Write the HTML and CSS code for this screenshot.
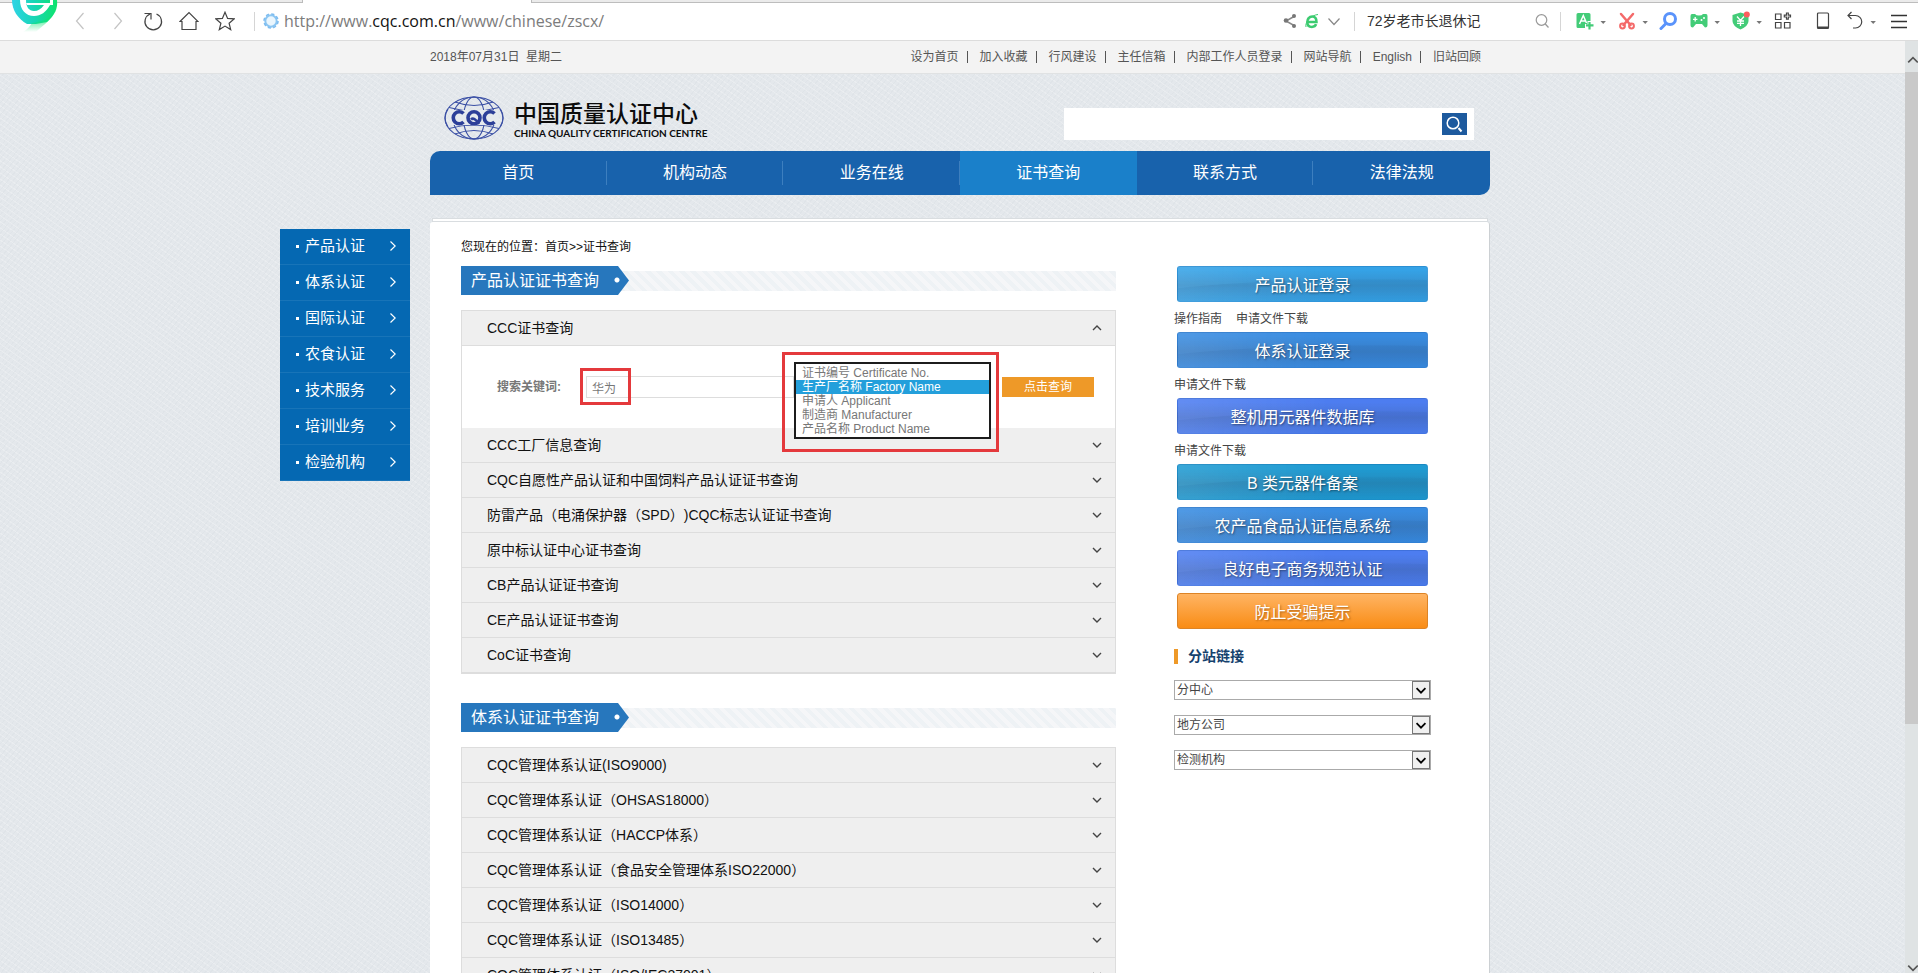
FILE: index.html
```html
<!DOCTYPE html>
<html lang="zh-CN">
<head>
<meta charset="utf-8">
<title>中国质量认证中心 - 证书查询</title>
<link rel="stylesheet" href="styles.css">
</head>
<body>
<svg class="sprite" aria-hidden="true">
  <symbol id="down" viewBox="0 0 10 6"><path d="M1 1l4 4 4-4" fill="none" stroke="currentColor" stroke-width="1.4"/></symbol>
  <symbol id="up" viewBox="0 0 10 6"><path d="M1 5l4-4 4 4" fill="none" stroke="currentColor" stroke-width="1.4"/></symbol>
  <symbol id="right" viewBox="0 0 6 10"><path d="M0.500.500L5.200 5 .500 9.500" fill="none" stroke="currentColor" stroke-width="1.2"/></symbol>
  <symbol id="caret" viewBox="0 0 8 20"><path d="M1.500 10h5.400L4.200 13z" fill="#777"/></symbol>
</svg>

<header class="browser">
  <div class="tabs"><span class="tab-side"></span><span class="tab-active"></span><span class="tab-rest"></span></div>
  <div class="toolbar">
    <svg class="app-logo" viewBox="0 0 48 36">
      <defs>
        <linearGradient id="lg" x1="0" x2="1"><stop offset="0" stop-color="#2fd3e6"/><stop offset=".5" stop-color="#18d6b4"/><stop offset="1" stop-color="#0fe36c"/></linearGradient>
        <linearGradient id="lt" x1="0" x2="0" y1="0" y2="1"><stop offset="0" stop-color="#12e275"/><stop offset="1" stop-color="#12e275" stop-opacity="0"/></linearGradient>
      </defs>
      <path d="M1 0h45c1 8-2 15-10 22L25 24 16 24C7 19 1 10 1 0z" fill="url(#lg)"/>
      <path d="M43 13C38 22 31 26 25 32H12c5-3 7-6 9-9 9-1 17-4 22-10z" fill="url(#lt)"/>
      <path d="M9 0c0 10 6 16 14 16 7 0 12-4 16-11h-6c-3 4-6 6-10 6-5 0-8-4-8-11z" fill="#fff"/>
      <path d="M15 3h24V0h3v5H16z" fill="#fff"/>
    </svg>
    <nav class="history" aria-label="浏览">
      <button class="tool" aria-label="后退"><svg viewBox="0 0 20 20"><path d="M12.500 2L5.500 10l7 8" class="ln pale"/></svg></button>
      <button class="tool" aria-label="前进"><svg viewBox="0 0 20 20"><path d="M7.500 2l7 8-7 8" class="ln pale"/></svg></button>
      <button class="tool" aria-label="刷新"><svg viewBox="0 0 20 20"><path d="M7 3A8.300 8.300 0 1 0 13.500 3M1.500 2.500H8V8.500" class="ln"/></svg></button>
      <button class="tool" aria-label="主页"><svg viewBox="0 0 20 20"><path d="M1 10.500L10 1.500l9 9H17V18.500H3V10.500z" class="ln"/></svg></button>
      <button class="tool" aria-label="收藏"><svg viewBox="0 0 20 20"><path d="M10 1.200l2.600 6.200 6.500.5-5 4.300 1.600 6.400L10 15.100l-5.700 3.500 1.600-6.400-5-4.300 6.500-.5z" class="ln"/></svg></button>
    </nav>
    <span class="rule"></span>
    <svg class="favicon" viewBox="0 0 16 16"><circle cx="8" cy="8" r="5.700" fill="#eaf6fe" stroke="#8cc6f2" stroke-width="2"/><circle cx="8" cy="8" r="7" fill="none" stroke="#7dbcf0" stroke-width="1.600" stroke-dasharray="3.200 2.300"/></svg>
    <div class="url">http://www.<b>cqc.com.cn</b>/www/chinese/zscx/</div>
    <div class="url-tools">
      <button class="tool" aria-label="分享"><svg viewBox="0 0 20 20"><path d="M14 5.500L6 10l8 4.500" fill="none" stroke="#888" stroke-width="1.500"/><g fill="#777"><circle cx="14" cy="5" r="2"/><circle cx="6" cy="9.500" r="2.300"/><circle cx="14" cy="15" r="2"/></g></svg></button>
      <button class="tool" aria-label="浏览模式"><svg viewBox="0 0 20 20"><path d="M5.500 11h9c0-4-1.500-5.500-4.300-5.500-3 0-4.900 2.400-4.900 5.400s1.700 5 4.600 5c2.200 0 3.700-1 4.200-2.700" fill="none" stroke="#3ccb70" stroke-width="2.500"/><path d="M4 16C2.500 12 9 4 16 3.500" fill="none" stroke="#3ccb70" stroke-width="1"/></svg></button>
      <button class="tool" aria-label="更多"><svg viewBox="0 0 20 20"><path d="M4.500 7.500l5.500 6 5.500-6" fill="none" stroke="#888" stroke-width="1.200"/></svg></button>
    </div>
    <span class="rule"></span>
    <input class="hot" type="text" aria-label="热搜" value="72岁老市长退休记">
    <button class="tool" aria-label="搜索"><svg viewBox="0 0 20 20"><circle cx="9.500" cy="9" r="5.300" fill="none" stroke="#999" stroke-width="1.200"/><path d="M13.300 13L16.500 16.500" stroke="#999" stroke-width="1.300"/></svg></button>
    <span class="rule rule-end"></span>
    <div class="addons">
      <button class="tool" aria-label="翻译"><svg viewBox="0 0 20 20"><path d="M3 2h11q1.500 0 1.500 1.500V10h-3v3H10v4H3q-1.500 0-1.500-1.500v-12Q1.500 2 3 2z" fill="#43cc78"/><path d="M4.500 13L8.300 4.500 11.500 12M6 10h4.500" fill="none" stroke="#fff" stroke-width="1.500"/><path d="M14.500 11v7.500M11 14.300h7.500" stroke="#43cc78" stroke-width="2.200"/></svg><svg class="caret"><use href="#caret"/></svg></button>
      <button class="tool" aria-label="截图"><svg viewBox="0 0 20 20"><path d="M4 3l9.500 11M16 3L6.500 14" stroke="#f46a6a" stroke-width="2.500" stroke-linecap="round"/><g fill="none" stroke="#f46a6a" stroke-width="2"><circle cx="5.500" cy="15" r="2.400"/><circle cx="14.500" cy="15" r="2.400"/></g></svg><svg class="caret"><use href="#caret"/></svg></button>
      <button class="tool" aria-label="查找"><svg viewBox="0 0 20 20"><circle cx="11" cy="8" r="5.500" fill="none" stroke="#5a93fb" stroke-width="3"/><path d="M7 12.500L2 17.500" stroke="#5a93fb" stroke-width="3" stroke-linecap="round"/></svg></button>
      <button class="tool" aria-label="游戏"><svg viewBox="0 0 20 20"><path d="M3 3h3q1 1.500 4 1.500T14 3h3q1.500 0 1.500 2v9q0 2.500-2.500 2.500L13 13H7l-3 3.500Q1.500 16.500 1.500 14V5Q1.500 3 3 3z" fill="#43cc78"/><path d="M4 8.300h4.400M6.200 6v4.500" stroke="#fff" stroke-width="1.300"/><circle cx="12.500" cy="9" r="1" fill="#fff"/><circle cx="15" cy="7" r="1" fill="#fff"/></svg><svg class="caret"><use href="#caret"/></svg></button>
      <button class="tool" aria-label="购物"><svg viewBox="0 0 20 20"><path d="M9.500 1.500L17.500 4v6q0 5-8 8.500Q1.500 15 1.500 10V4z" fill="#43cc78"/><path d="M6 5.500L9.500 9.500 13 5.500M6 10h7M6 12.300h7M9.500 9.500V15" fill="none" stroke="#fff" stroke-width="1.300"/><circle cx="15.800" cy="3.500" r="3" fill="#fc5d5d"/></svg><svg class="caret"><use href="#caret"/></svg></button>
      <button class="tool" aria-label="扩展"><svg viewBox="0 0 20 20"><path d="M2.500 3h5.500v5.500H2.500zM2.500 11.500h5.500v5.500H2.500zM11.500 11.500H17v5.500h-5.500zM13.500 2h1.800v2.200h2.200V6h-2.200v2.200h-1.800V6h-2.200V4.200h2.200z" class="ln"/></svg></button>
    </div>
    <div class="addons system">
      <button class="tool" aria-label="手机"><svg viewBox="0 0 20 20"><rect x="4.500" y="2" width="11" height="15.500" rx="1" class="ln"/><path d="M4.500 16.500h11" stroke="#444" stroke-width="2"/></svg></button>
      <button class="tool" aria-label="恢复"><svg viewBox="0 0 20 20"><path d="M6.500 1L3 4.500 6.500 8M3 4.500h7.500a6.200 6.200 0 0 1 0 12.500H8" class="ln"/></svg><svg class="caret"><use href="#caret"/></svg></button>
      <button class="tool" aria-label="菜单"><svg viewBox="0 0 20 20"><path d="M2 4.500h16M2 10.500h16M2 16.500h16" class="ln thick"/></svg></button>
    </div>
  </div>
</header>

<div class="page">
  <div class="topbar">
    <div class="wrap topbar-in">
      <span class="date">2018年07月31日&nbsp; 星期二</span>
      <nav class="top-links">
        <a href="#">设为首页</a><a href="#">加入收藏</a><a href="#">行风建设</a><a href="#">主任信箱</a><a href="#">内部工作人员登录</a><a href="#">网站导航</a><a href="#">English</a><a href="#">旧站回顾</a>
      </nav>
    </div>
  </div>

  <div class="wrap">
    <div class="masthead">
      <a class="brand" href="#">
        <svg class="globe" viewBox="0 0 60 44">
          <g fill="none" stroke="#3b50a5" stroke-width="1.100">
            <ellipse cx="30" cy="22" rx="29" ry="21"/><ellipse cx="30" cy="22" rx="21" ry="21"/><ellipse cx="30" cy="22" rx="10.500" ry="21"/>
            <path d="M11 6q19 7 38 0M5 11.500q25 7 50 0M5 32.500q25-7 50 0M11 38q19-7 38 0"/>
          </g>
          <path d="M6 14h48v15H6z" fill="#e6eaee"/>
          <path d="M1 22A29 21 0 0 1 4 13M59 22A29 21 0 0 0 56 13M1 22a29 21 0 0 0 3 9M59 22a29 21 0 0 1-3 9" fill="none" stroke="#3b50a5" stroke-width="1.100"/>
          <g fill="none" stroke="#2c3f99" stroke-width="3.600">
            <path d="M19.500 17.500a6 6 0 1 0 0 8.500"/><circle cx="30" cy="21.800" r="6"/><path d="M50.500 17.500a6 6 0 1 0 0 8.500"/><path d="M27 23.500q3-3 8 4.500" stroke-width="2.500"/>
          </g>
        </svg>
        <span class="brand-text"><strong>中国质量认证中心</strong><em>CHINA QUALITY CERTIFICATION CENTRE</em></span>
      </a>
      <form class="site-search">
        <input type="search" aria-label="站内搜索">
        <button type="button" aria-label="搜索"><svg viewBox="0 0 25 22"><circle cx="11" cy="10" r="5.800" fill="none" stroke="#fff" stroke-width="1.500"/><path d="M16.500 15l3 3.500" stroke="#fff" stroke-width="2"/></svg></button>
      </form>
    </div>
    <nav class="main-nav">
      <a href="#">首页</a><a href="#">机构动态</a><a href="#">业务在线</a><a href="#" class="on">证书查询</a><a href="#">联系方式</a><a href="#">法律法规</a>
    </nav>
  </div>

  <div class="body-grid">
    <aside class="side-nav">
      <a href="#">产品认证<svg><use href="#right"/></svg></a>
      <a href="#">体系认证<svg><use href="#right"/></svg></a>
      <a href="#">国际认证<svg><use href="#right"/></svg></a>
      <a href="#">农食认证<svg><use href="#right"/></svg></a>
      <a href="#">技术服务<svg><use href="#right"/></svg></a>
      <a href="#">培训业务<svg><use href="#right"/></svg></a>
      <a href="#">检验机构<svg><use href="#right"/></svg></a>
    </aside>

    <div class="sheet">
      <div class="sheet-lip"></div>
      <main class="panel">
        <div class="crumb">您现在的位置：<a href="#">首页</a>&gt;&gt;<a href="#">证书查询</a></div>
        <div class="columns">
          <div class="queries">
            <section>
              <div class="title"><h2>产品认证证书查询</h2></div>
              <div class="accordion">
                <button class="row open" aria-expanded="true">CCC证书查询<svg><use href="#up"/></svg></button>
                <form class="search-form">
                  <label for="kw">搜索关键词:</label>
                  <div class="kw-wrap">
                    <input id="kw" type="text" value="华为">
                    <span class="mark"></span>
                  </div>
                  <div class="type-mark">
                    <select size="5" aria-label="查询类型">
                      <option>证书编号 Certificate No.</option>
                      <option selected>生产厂名称 Factory Name</option>
                      <option>申请人 Applicant</option>
                      <option>制造商 Manufacturer</option>
                      <option>产品名称 Product Name</option>
                    </select>
                  </div>
                  <button type="button" class="go">点击查询</button>
                </form>
                <button class="row">CCC工厂信息查询<svg><use href="#down"/></svg></button>
                <button class="row">CQC自愿性产品认证和中国饲料产品认证证书查询<svg><use href="#down"/></svg></button>
                <button class="row">防雷产品（电涌保护器（SPD）)CQC标志认证证书查询<svg><use href="#down"/></svg></button>
                <button class="row">原中标认证中心证书查询<svg><use href="#down"/></svg></button>
                <button class="row">CB产品认证证书查询<svg><use href="#down"/></svg></button>
                <button class="row">CE产品认证证书查询<svg><use href="#down"/></svg></button>
                <button class="row">CoC证书查询<svg><use href="#down"/></svg></button>
              </div>
            </section>
            <section>
              <div class="title"><h2>体系认证证书查询</h2></div>
              <div class="accordion">
                <button class="row">CQC管理体系认证(ISO9000)<svg><use href="#down"/></svg></button>
                <button class="row">CQC管理体系认证（OHSAS18000）<svg><use href="#down"/></svg></button>
                <button class="row">CQC管理体系认证（HACCP体系）<svg><use href="#down"/></svg></button>
                <button class="row">CQC管理体系认证（食品安全管理体系ISO22000）<svg><use href="#down"/></svg></button>
                <button class="row">CQC管理体系认证（ISO14000）<svg><use href="#down"/></svg></button>
                <button class="row">CQC管理体系认证（ISO13485）<svg><use href="#down"/></svg></button>
                <button class="row">CQC管理体系认证（ISO/IEC27001）<svg><use href="#down"/></svg></button>
              </div>
            </section>
          </div>

          <aside class="logins">
            <a class="login sky" href="#">产品认证登录</a>
            <div class="notes"><a href="#">操作指南</a><a href="#">申请文件下载</a></div>
            <a class="login blue" href="#">体系认证登录</a>
            <div class="notes"><a href="#">申请文件下载</a></div>
            <a class="login violet" href="#">整机用元器件数据库</a>
            <div class="notes"><a href="#">申请文件下载</a></div>
            <a class="login teal" href="#">B 类元器件备案</a>
            <a class="login blue" href="#">农产品食品认证信息系统</a>
            <a class="login violet" href="#">良好电子商务规范认证</a>
            <a class="login orange" href="#">防止受骗提示</a>
            <h3>分站链接</h3>
            <div class="pick"><select aria-label="分中心"><option>分中心</option></select><svg viewBox="0 0 18 18"><path d="M4 7l5 5 5-5"/></svg></div>
            <div class="pick"><select aria-label="地方公司"><option>地方公司</option></select><svg viewBox="0 0 18 18"><path d="M4 7l5 5 5-5"/></svg></div>
            <div class="pick"><select aria-label="检测机构"><option>检测机构</option></select><svg viewBox="0 0 18 18"><path d="M4 7l5 5 5-5"/></svg></div>
          </aside>
        </div>
      </main>
    </div>
  </div>

  <div class="scrollbar">
    <svg><use href="#up"/></svg>
    <span class="thumb"></span>
    <svg><use href="#down"/></svg>
  </div>
</div>
</body>
</html>
```

FILE: styles.css
```css
* { box-sizing: border-box; }

body {
  margin: 0;
  height: 100vh;
  overflow: hidden;
  display: flex;
  flex-direction: column;
  background: #fff;
  font: 12px/16px "Liberation Sans", "Noto Sans CJK SC", sans-serif;
  color: #444;
  text-spacing-trim: space-all;
}

a { color: inherit; text-decoration: none; }
button, input, select { font: inherit; color: inherit; margin: 0; text-spacing-trim: inherit; }
button { border: 0; background: none; padding: 0; cursor: pointer; }
.sprite { display: none; }

/* browser bar */
.browser { flex: none; position: relative; z-index: 2; }
.tabs { display: flex; height: 3px; }
.tab-side { width: 302px; }
.tab-active { width: 230px; border: solid #bbb; border-width: 0 1px; }
.tab-rest { flex: 1; }
.tab-side, .tab-rest { background: #ebebeb; border-bottom: 1px solid #bdbdbd; }

.toolbar {
  display: flex;
  align-items: center;
  height: 38px;
  padding: 0 9px 1px 71px;
  border-bottom: 1px solid #dcdcdc;
  background: #fff;
}
.app-logo { position: absolute; left: 11px; top: 0; width: 48px; height: 36px; }
.tool { display: flex; gap: 4px; flex: none; }
.tool svg { width: 20px; height: 20px; }
.tool .caret { width: 8px; }
.ln { fill: none; stroke: #444; stroke-width: 1.2; }
.pale { stroke: #c4c4c4; }
.thick { stroke: #333; stroke-width: 1.5; }
.history { display: flex; gap: 16px; padding-right: 19px; }
.rule { width: 1px; height: 19px; background: #d5d5d5; flex: none; }
.favicon { width: 16px; height: 16px; margin: 0 5px 0 8px; }
.url { flex: 1; font: 16px/20px "Open Sans", "Noto Sans", sans-serif; color: #7c7c7c; }
.url b { font-weight: 400; color: #111; }
.url-tools { display: flex; gap: 2px; padding-right: 10px; }
.hot { width: 177px; border: 0; padding: 0 12px; font-size: 14px; line-height: 20px; color: #333; background: none; }
.rule-end { margin: 0 14px 0 8px; }
.addons { display: flex; gap: 10px; }
.system { gap: 12px; margin-left: 20px; }

/* page */
.page {
  flex: 1;
  min-height: 0;
  overflow: hidden;
  position: relative;
  background-color: #e4e8ec;
  background-image:
    repeating-linear-gradient(35deg, rgba(255, 255, 255, .22) 0 1px, transparent 1px 5px),
    repeating-linear-gradient(-50deg, rgba(200, 208, 214, .16) 0 1px, transparent 1px 4px);
  padding-left: 2px;
}
.wrap { width: min(1060px, 100%); margin: 0 auto; }

.topbar { margin-left: -2px; padding-left: 2px; background: #f3f3f3; border-bottom: 1px solid #e0e2e3; }
.topbar-in { display: flex; justify-content: space-between; padding: 8px 9px 8px 0; color: #555; }
.top-links { display: flex; }
.top-links a + a { display: flex; align-items: center; }
.top-links a + a::before { content: ""; width: 1px; height: 12px; margin: 0 12px 0 8px; background: #555; }

.masthead { display: flex; justify-content: space-between; padding: 22px 16px 11px 14px; height: 77px; }
.brand { display: flex; gap: 10px; color: #0c0c0c; }
.globe { width: 60px; height: 44px; }
.brand-text { display: flex; flex-direction: column; padding-top: 4px; }
.brand-text strong { font-size: 23px; line-height: 28px; font-weight: 500; }
.brand-text em { font: 700 10px/10px Lato, sans-serif; }
.site-search { display: flex; align-items: center; width: 410px; height: 32px; margin-top: 12px; padding-right: 7px; background: #fff; }
.site-search input { flex: 1; border: 0; outline: 0; background: none; padding: 0 8px; }
.site-search button { width: 25px; height: 22px; background: #1d5a9e; }
.site-search svg { display: block; }

.main-nav {
  display: flex;
  background: #1862ac;
  border-radius: 10px 0 10px 0;
  overflow: hidden;
  color: #fff;
  font-size: 16px;
  line-height: 44px;
  text-align: center;
}
.main-nav a { flex: 1; background: linear-gradient(#3d7fbf, #3d7fbf) right center / 1px 24px no-repeat; }
.main-nav a:last-child { background: none; }
.main-nav .on { background: #1a80ca; }

.body-grid { display: grid; grid-template-columns: 1fr minmax(0, 1060px) 1fr; padding-top: 23px; }

.side-nav { justify-self: end; align-self: start; width: 130px; margin: 11px 20px 0 0; background: #0568b2; color: #fff; }
.side-nav a {
  display: flex;
  align-items: center;
  height: 36px;
  padding: 0 14px 1px 16px;
  font-size: 15px;
  border-bottom: 1px solid #1874b8;
}
.side-nav a::before { content: ""; width: 3px; height: 3px; margin-right: 6px; background: #fff; }
.side-nav svg { width: 6px; height: 10px; margin-left: auto; }

.sheet-lip { height: 4px; margin: 0 2px; background: #fff; border: 1px solid #d9dde0; }
.panel {
  background: #fff;
  border-radius: 3px 3px 0 0;
  border-right: 1px solid #ccd0d3;
  padding: 17px 58px 0 31px;
}
.crumb { margin-bottom: 11px; color: #111; }
.columns { display: grid; grid-template-columns: minmax(0, 1fr) 257px; gap: 58px; }

.title {
  display: flex;
  margin-bottom: 15px;
  background: repeating-linear-gradient(45deg, #eef2f5 0 4px, #f5f6f8 4px 8px) center / 100% 20px no-repeat;
}
.title h2 {
  margin: 0;
  width: 168px;
  padding-left: 10px;
  font-size: 16px;
  line-height: 29px;
  font-weight: 400;
  color: #fff;
  background:
    radial-gradient(circle at 156px 14px, #fff 2px, transparent 3px),
    #2777bd;
  clip-path: polygon(0 0, 157px 0, 100% 50%, 157px 100%, 0 100%);
}
.queries section + section { margin-top: 29px; }

.accordion { border: 1px solid #ddd; }
.row {
  display: flex;
  align-items: center;
  justify-content: space-between;
  width: 100%;
  height: 35px;
  padding: 0 13px 0 25px;
  font-size: 14px;
  color: #111;
  text-align: left;
  background: #efefef;
  border-bottom: 1px solid #ddd;
}
.row svg { width: 10px; height: 6px; color: #444; }

.search-form { display: flex; align-items: center; height: 82px; padding-left: 35px; }
.search-form label { width: 89px; font-weight: 700; color: #777; }
.kw-wrap { position: relative; width: 208px; }
.kw-wrap input { display: block; width: 100%; height: 22px; padding: 0 5px; border: 1px solid #ddd; color: #777; }
.mark { position: absolute; left: -6px; top: -8px; width: 51px; height: 37px; border: 3px solid #e4393c; pointer-events: none; }
.type-mark {
  position: relative;
  flex: none;
  align-self: flex-start;
  z-index: 1;
  width: 217px;
  height: 100px;
  margin: 6px 3px 0 -12px;
  padding: 7px 5px 0 9px;
  border: 3px solid #e4393c;
}
.type-mark select {
  display: block;
  width: 197px;
  height: 77px;
  padding: 2px 0;
  border: 2px solid #1c1c1c;
  border-radius: 0;
  outline: 0;
  overflow: hidden;
  background: #fff;
  color: #777;
}
.type-mark option { display: flex; align-items: center; height: 14px; min-height: 14px; padding: 0 6px 3px; line-height: 14px; }
.type-mark option:checked { background: #239fdb linear-gradient(#239fdb, #239fdb); color: #fff; -webkit-text-fill-color: #fff; }
.go { width: 92px; height: 20px; background: #ee9928; color: #fff; line-height: 20px; }

/* right column */
.login {
  display: block;
  height: 36px;
  margin: 0 3px 7px;
  border-radius: 3px;
  font-size: 16px;
  line-height: 37px;
  text-align: center;
  color: #fff;
  text-shadow: 1px 1px 2px rgba(0, 0, 0, .45);
  border: 1px solid rgba(0, 60, 140, .12);
  background-color: var(--c);
  background-image:
    radial-gradient(ellipse 260px 24px at 200px 36px, rgba(0, 30, 80, .05) 97%, transparent 100%),
    linear-gradient(90deg, rgba(255, 255, 255, .12), transparent 60%),
    linear-gradient(transparent 10%, rgba(60, 80, 110, .22) 55%, transparent);
}
.login:has(+ .notes) { margin-bottom: 0; }
.sky { --c: #35a2e6; }
.blue { --c: #388be0; }
.violet { --c: #4d7df0; }
.teal { --c: #1f9bd2; }
.orange { background: linear-gradient(#ffb463, #f98c15); border-color: #dd8426; text-shadow: 1px 1px 2px rgba(120, 60, 0, .6); }
.notes { display: flex; gap: 14px; height: 30px; padding-top: 9px; }
.logins h3 {
  display: flex;
  align-items: center;
  gap: 10px;
  margin: 14px 0 16px;
  padding-top: 5px;
  font-size: 14px;
  line-height: 16px;
  color: #14416d;
}
.logins h3::before { content: ""; width: 4px; height: 15px; background: #ee9928; }
.pick { position: relative; margin-bottom: 15px; }
.pick select { appearance: none; display: block; width: 100%; height: 20px; padding: 0 22px 0 2px; border: 1px solid #aaa; border-radius: 0; background: #fff; }
.pick svg { position: absolute; right: 1px; top: 1px; width: 18px; height: 18px; background: #f0f0f0; border: 1px solid #777; fill: none; stroke: #000; stroke-width: 2; pointer-events: none; }

/* scroll bar */
.scrollbar {
  position: absolute;
  inset: 0 0 0 auto;
  width: 13px;
  display: flex;
  flex-direction: column;
  justify-content: space-between;
  background: #dfe3e4;
}
.scrollbar svg { width: 12px; height: 8px; margin: 15px 0 0 2px; color: #555; }
.scrollbar svg:last-child { margin: 0 0 1px 2px; }
.thumb { height: 70%; margin: 8px 0 auto; background: #c9c9c9; }
```
